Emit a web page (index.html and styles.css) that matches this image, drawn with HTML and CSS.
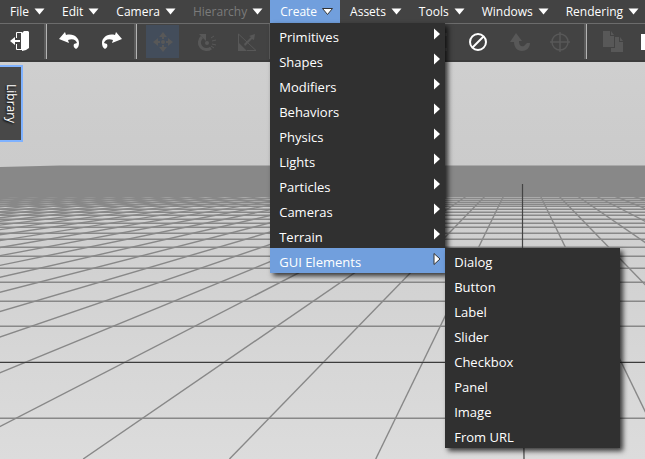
FILE: index.html
```html
<!DOCTYPE html>
<html lang="en">
<head>
<meta charset="utf-8">
<title>Scene Editor</title>
<link rel="stylesheet" href="styles.css">
</head>
<body>
<svg class="defs" aria-hidden="true">
  <symbol id="down" viewBox="0 0 11 8"><path d="M.5 .5h10L5.500 6.500z"/></symbol>
  <symbol id="right" viewBox="0 0 8 12"><path d="M1 .5v11L7 6z"/></symbol>
</svg>
<div class="app">
  <nav class="menubar" aria-label="Main menu">
    <div class="item"><button>File<svg class="down"><use href="#down"/></svg></button></div>
    <div class="item"><button>Edit<svg class="down"><use href="#down"/></svg></button></div>
    <div class="item"><button>Camera<svg class="down"><use href="#down"/></svg></button></div>
    <div class="item"><button disabled>Hierarchy<svg class="down"><use href="#down"/></svg></button></div>
    <div class="item open"><button aria-expanded="true">Create<svg class="down"><use href="#down"/></svg></button>
      <ul class="menu">
        <li><button>Primitives<svg class="right"><use href="#right"/></svg></button></li>
        <li><button>Shapes<svg class="right"><use href="#right"/></svg></button></li>
        <li><button>Modifiers<svg class="right"><use href="#right"/></svg></button></li>
        <li><button>Behaviors<svg class="right"><use href="#right"/></svg></button></li>
        <li><button>Physics<svg class="right"><use href="#right"/></svg></button></li>
        <li><button>Lights<svg class="right"><use href="#right"/></svg></button></li>
        <li><button>Particles<svg class="right"><use href="#right"/></svg></button></li>
        <li><button>Cameras<svg class="right"><use href="#right"/></svg></button></li>
        <li><button>Terrain<svg class="right"><use href="#right"/></svg></button></li>
        <li class="open"><button aria-expanded="true">GUI Elements<svg class="right"><use href="#right"/></svg></button>
          <ul class="menu submenu">
            <li><button>Dialog</button></li>
            <li><button>Button</button></li>
            <li><button>Label</button></li>
            <li><button>Slider</button></li>
            <li><button>Checkbox</button></li>
            <li><button>Panel</button></li>
            <li><button>Image</button></li>
            <li><button>From URL</button></li>
          </ul>
        </li>
      </ul>
    </div>
    <div class="item"><button>Assets<svg class="down"><use href="#down"/></svg></button></div>
    <div class="item"><button>Tools<svg class="down"><use href="#down"/></svg></button></div>
    <div class="item"><button>Windows<svg class="down"><use href="#down"/></svg></button></div>
    <div class="item"><button>Rendering<svg class="down"><use href="#down"/></svg></button></div>
  </nav>
  <div class="toolbar" role="toolbar" aria-label="Tools">
    <div class="group first">
      <button aria-label="Exit"><svg viewBox="0 0 24 24"><path d="M8.500 8V2.500H14M8.500 14v5.500H14M13.500 3v16" fill="none" stroke="currentColor"/><path d="M14 3l2-2h4l1 1v16l-3 2-4 1zM2 11l5-4v3h5v2H7v3z"/></svg></button>
    </div>
    <div class="group">
      <button aria-label="Undo"><svg viewBox="0 0 24 24"><path d="M1 9l6-7 1 3c8-2 13 3 13 8 0 3-1 5-3 6-2-1-3-3-2-5l3-1c-1-3-4-5-9-3l1 3z"/></svg></button>
      <button aria-label="Redo"><svg viewBox="0 0 24 24"><path d="M22 9l-6-7-1 3C7 3 2 8 2 13c0 3 1 5 3 6 2-1 3-3 2-5l-3-1c1-3 4-5 9-3l-1 3z"/></svg></button>
    </div>
    <div class="group wide">
      <button class="active" disabled aria-label="Move"><svg viewBox="0 0 24 24"><path d="M12 2l4 5h-3v2h-2V7H8zM12 22l4-5h-3v-2h-2v2H8zM2 12l5-4v3h2v2H7v3zM22 12l-5-4v3h-2v2h2v3z"/><circle cx="12" cy="12" r="2"/></svg></button>
      <button disabled aria-label="Rotate"><svg viewBox="0 0 24 24"><path d="M9 7a7 7 0 1 0 9 11" fill="none" stroke="currentColor" stroke-width="3"/><path d="M6 4h7v7z"/><circle cx="14" cy="13" r="2"/><path d="M18 8l3-2M19 11l4-1M19 14l4 1M18 16l3 2" stroke="currentColor"/></svg></button>
      <button disabled aria-label="Scale"><svg viewBox="0 0 24 24"><path d="M3.500 14V4L21 20.500H12" fill="none" stroke="currentColor"/><path d="M3 12l9 9H3zM9 14l7-7-2-1 6-2-1 6-2-1-7 7z"/></svg></button>
    </div>
    <div class="group wide">
      <button disabled aria-label="Align"></button>
      <button disabled aria-label="Group"></button>
      <button disabled aria-label="Ungroup"></button>
    </div>
    <div class="group wider">
      <button disabled aria-label="Snap"><svg viewBox="0 0 24 24"><path d="M20 3h3v3h-3zM20 18h3v3h-3z"/></svg></button>
      <button aria-label="None"><svg viewBox="0 0 24 24"><g fill="none" stroke="currentColor" stroke-width="2"><circle cx="12" cy="12" r="8"/><path d="M6.500 17.500l11-11"/></g></svg></button>
      <button disabled aria-label="Attach"><svg viewBox="0 0 24 24"><path d="M8 3l6 8h-3c0 5 3 6 5 5l3-3h3c0 5-4 8-8 8-5 0-8-4-8-9H2z"/></svg></button>
      <button disabled aria-label="Center"><svg viewBox="0 0 24 24"><g fill="none" stroke="currentColor" stroke-width="1.500"><circle cx="10" cy="12" r="8"/><path d="M10 2v20M0 12h20"/></g></svg></button>
    </div>
    <div class="group wide">
      <button disabled aria-label="Copy"><svg viewBox="0 0 24 24"><path d="M2 1h7v5h4v11H2zM10 1l3 4h-3z"/><path d="M14 7h4v5h4v10H10v-4h4zM19 7l3 4h-3z"/></svg></button>
      <button aria-label="Paste"><svg viewBox="0 0 24 24"><path d="M-2 4h4V2h6v2h6v16H-2z"/><path d="M2 12l3-3v6z" fill="#434343"/></svg></button>
    </div>
  </div>
  <main class="viewport">
    <svg class="grid" viewBox="0 62 645 397" preserveAspectRatio="xMinYMin slice" aria-hidden="true"></svg>
    <button class="library">Library</button>
  </main>
</div>
<script src="grid.js"></script>
</body>
</html>
```
FILE: styles.css
```css
* { box-sizing: border-box; }
body {
  margin: 0;
  font: 13px/18px "Open Sans", "Noto Sans", sans-serif;
  color: #fff;
  overflow: hidden;
}
button {
  font: inherit;
  color: inherit;
  background: none;
  border: 0;
  padding: 0;
  white-space: nowrap;
}
svg { fill: currentColor; flex: none; }
.defs { position: absolute; width: 0; height: 0; }
.app { display: flex; flex-direction: column; height: 100vh; }

.menubar { display: flex; height: 23px; background: #434343; flex: none; }
.item { position: relative; flex: none; }
.item > button {
  display: flex;
  align-items: flex-start;
  height: 23px;
  gap: 5px;
  padding: 3px 7px 0 10px;
  font-size: 12px;
}
.item > button:disabled { color: #7b7b7b; }
.down { width: 11px; height: 8px; margin-top: 5px; color: #fff; }
.item.open > button { background: #719fdd; }
.open > button > svg { stroke: #333; overflow: visible; }

.menu {
  position: absolute;
  z-index: 2;
  top: 100%;
  left: 0;
  width: 175px;
  margin: 0;
  padding: 0;
  list-style: none;
  background: #303030;
  box-shadow: 3px 3px 5px rgba(0, 0, 0, .75);
}
.menu li { position: relative; }
.menu li > button {
  display: flex;
  justify-content: space-between;
  width: 100%;
  height: 25px;
  padding: 5px 4px 2px 9px;
}
.menu li.open > button { background: #719fdd; }
.right { width: 8px; height: 12px; }
.submenu { top: 0; left: 100%; }

.toolbar {
  display: flex;
  flex: none;
  height: 39px;
  overflow: hidden;
  background: #434343;
  border-top: 1px solid #6c6c6c;
  border-bottom: 2px solid #3b3b3b;
}
.group {
  display: flex;
  flex: none;
  gap: 9px;
  height: 35px;
  padding: 1px 8px 0 6px;
  border-right: 1px solid #b4b4b4;
  box-shadow: inset -2px 0 #5c5c5c;
}
.group.first { padding: 1px 10px 0 3px; }
.group.wide { padding-left: 9px; }
.group.wider { padding-left: 12px; }
.group button { display: grid; place-items: center; width: 33px; height: 33px; }
.group button:disabled { color: #585858; }
.group button.active { background: #434d5b; }
.group svg { width: 24px; height: 24px; overflow: visible; }

.viewport { position: relative; flex: 1; min-height: 0; background: linear-gradient(#cfcfcf, #cbcbcb 26%, #d0d0d0 45%, #dcdcdc); }
.grid { display: block; width: 100%; height: 100%; }
.library {
  position: absolute;
  top: 3px;
  left: 0;
  width: 23px;
  height: 77px;
  border: 2px solid #7fb2ff;
  border-left: 0;
  background: #484848;
  font-size: 12px;
  writing-mode: vertical-rl;
  text-align: center;
  text-shadow: 1px 1px 2px #000;
}
```
FILE: grid.js
```js
// Ground plane drawn in perspective: rows recede to the horizon, columns meet at the vanishing point.
const svg = document.querySelector('.grid');
const horizon = 158, vanishX = 522, depth = 948, near = 3.642, slope = 0.486;
const fogEnd = 195, bottom = 459;

function add(name, attrs) {
  const node = document.createElementNS('http://www.w3.org/2000/svg', name);
  for (const key in attrs) node.setAttribute(key, attrs[key]);
  svg.appendChild(node);
}

add('path', { d: 'M0 167L60 165.500H645V196H0z', fill: '#888' });
for (let k = -60; k <= 60; k++) {
  if (k === 0) continue;
  add('line', {
    x1: vanishX + k * slope * (fogEnd - horizon), y1: fogEnd,
    x2: vanishX + k * slope * (bottom - horizon), y2: bottom,
    stroke: '#888', 'stroke-width': 1.4
  });
}
for (let n = 0; n < 24; n++) {
  const y = Math.round(horizon + depth / (near + n));
  add('rect', { x: 0, y: y, width: 645, height: 1, fill: n === 1 ? '#3c3c3c' : '#888' });
  add('rect', { x: 0, y: y - 1, width: 645, height: 1, fill: '#888', opacity: 0.5 });
}
add('path', { d: 'M522.500 184V260L524 459', fill: 'none', stroke: '#444', 'stroke-width': 1.2 });
```
